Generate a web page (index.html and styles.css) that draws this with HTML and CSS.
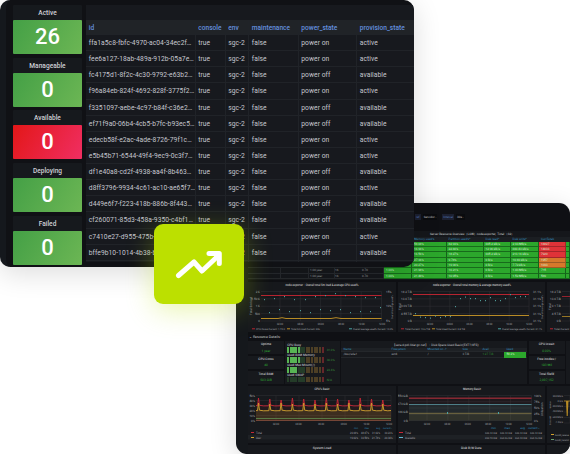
FILE: index.html
```html
<!DOCTYPE html>
<html lang="en">
<head>
<meta charset="utf-8">
<title>Monitoring</title>
<link rel="stylesheet" href="styles.css">
</head>
<body>
<main class="stage">
  <section class="back">
    <div class="filters"><b>ref</b><span>Servidor -</span><b class="gap">Interval</b><span>30s -</span></div>
    <div class="overview">
      <div class="ov-title">Server Resource Overview（LOW）node-exporter,&nbsp; Total:（32）</div>
      <div class="ov-grid" id="overview"></div>
    </div>
    <div class="charts charts-a">
      <div class="panel"><svg id="cpuTotal" viewBox="0 0 148 50"></svg></div>
      <div class="panel"><svg id="memTotal" viewBox="0 0 148 50"></svg></div>
      <div class="panel"><svg id="diskTotal" viewBox="0 0 23 50"></svg></div>
    </div>
    <div class="section-name">⌄ Resource Details:</div>
    <div class="details">
      <div class="stats">
        <div><b>Uptime</b><i>1 year</i></div>
        <div><b>CPU Cores</b><i>40</i></div>
        <div><b>Total RAM</b><i>503 GiB</i></div>
      </div>
      <div class="gauges" id="gauges"></div>
      <div class="disk">
        <div class="disk-title">【sera-d-pdl-lldar.gc.net】：Disk Space Used Basic(EXT?/XFS)</div>
        <div class="disk-row disk-head"><span>Name</span><span>Filesystem</span><span>Mounted on -?</span><span>Size</span><span>Avail</span><span>Used</span></div>
        <div class="disk-row"><span>/dev/sda1</span><span>ext4</span><span>/</span><span>3 TiB</span><span class="ok">1.27 TiB</span><span class="used">58.2%</span></div>
      </div>
      <div class="stats">
        <div><b>CPU iowait</b><i>0.00%</i></div>
        <div><b>Free inodes:/</b><i>183 Mil</i></div>
        <div><b>Total filefd</b><i>2,097,152</i></div>
      </div>
      <div class="panel"></div>
    </div>
    <div class="charts charts-b">
      <div class="panel"><svg id="cpuBasic" viewBox="0 0 148 57"></svg></div>
      <div class="panel"><svg id="memBasic" viewBox="0 0 148 57"></svg></div>
      <div class="panel"><svg id="netBasic" viewBox="0 0 23 57"></svg></div>
    </div>
    <div class="charts charts-c">
      <div class="panel">System Load</div><div class="panel">Disk R/W Data</div><div class="panel"></div>
    </div>
  </section>

  <section class="front">
    <div class="tiles">
      <div class="tile"><h3>Active</h3><p>26</p></div>
      <div class="tile"><h3>Manageable</h3><p>0</p></div>
      <div class="tile"><h3>Available</h3><p class="red">0</p></div>
      <div class="tile"><h3>Deploying</h3><p>0</p></div>
      <div class="tile"><h3>Failed</h3><p>0</p></div>
    </div>
    <div class="nodes" id="nodes">
      <div class="row head"><span>id</span><span>console</span><span>env</span><span>maintenance</span><span>power_state</span><span>provision_state</span></div>
    </div>
  </section>

  <div class="badge">
    <svg viewBox="0 0 90 80"><path d="M24.500 41 V41" stroke="none"/><path d="M24.500 51.500 L40 38 L48 47 L64 32" fill="none" stroke="#fff" stroke-width="5" stroke-linecap="round" stroke-linejoin="round"/><path d="M55 29.500 H65.300 V39.500" fill="none" stroke="#fff" stroke-width="5" stroke-linecap="round" stroke-linejoin="round"/><path d="M58 30 H65 V37 Z" fill="#fff"/></svg>
  </div>
</main>
<script src="script.js"></script>
</body>
</html>
```
FILE: styles.css
```css
* { box-sizing: border-box; }
body { margin: 0; background: #fff; font-family: Roboto, "Liberation Sans", sans-serif; }
.stage { position: relative; width: 570px; height: 454px; overflow: hidden; }

/* front card */
.front {
  position: absolute; left: 0; top: 0; width: 414px; height: 267px;
  display: flex; gap: 4px; padding: 5px 0 0 7px;
  border-left: 6px solid #15181d; background: #101115;
  border-radius: 10px; overflow: hidden;
}
.front, .back { box-shadow: 0 6px 28px rgba(0, 0, 0, .14); }
.tiles { width: 69px; display: flex; flex-direction: column; gap: 3.670px; flex: none; }
.tile { height: 49px; flex: none; background: #16191d; border-radius: 1px; }
.tile h3 { margin: 0; height: 15px; line-height: 16px; text-align: center; font-size: 6.600px; font-weight: 500; color: #cfd0d6; }
.tile p {
  margin: 0; height: 34px; line-height: 33px; text-align: center;
  font-size: 22px; font-weight: 500; color: #fff; border-radius: 1px;
  background: linear-gradient(120deg, #44a046, #6cb654);
}
.tile .red { background: linear-gradient(120deg, #e31718, #f02e62); }
.nodes { flex: 1; height: 257px; padding-top: 15px; background: #17191e; overflow: hidden; }
.row { display: grid; grid-template-columns: 109.500px 30px 23.500px 49.500px 58.500px 1fr; height: 16.140px; border-bottom: 1px solid #202328; }
.row span {
  padding-left: 2.800px; line-height: 17px; font-size: 6.700px; letter-spacing: .06px; color: #c6c7cf;
  border-right: 1px solid #202328; white-space: nowrap; overflow: hidden;
}
.row span:last-child { border-right: 0; }
.head { height: 15px; background: #202327; }
.head span { color: #6490df; font-weight: 500; font-size: 6.600px; line-height: 16px; letter-spacing: 0; }

/* badge */
.badge { position: absolute; left: 154px; top: 224px; width: 90px; height: 80px; border-radius: 9px; background: #bce000; box-shadow: 0 6px 28px rgba(188, 224, 0, .32); }
.badge svg { display: block; width: 90px; height: 80px; }

/* back card */
.back {
  position: absolute; left: 236px; top: 203px; width: 334px; height: 251px;
  border-left: 12px solid #15181c; border-radius: 11px; background: #0f1014; overflow: hidden;
  font-size: 3.400px; line-height: 4px; color: #a4a6ab; white-space: nowrap; text-rendering: geometricPrecision;
}
.filters { height: 28px; padding: 11px 0 0 167px; display: flex; align-items: flex-start; gap: 2px; font-size: 3px; }
.filters b { color: #5578be; font-weight: 400; background: #1c2030; padding: 1px; }
.filters span { background: #0a0b0e; padding: 1px; color: #c6c7ca; }
.filters .gap { margin-left: 3px; }
.overview { height: 49px; background: #15171b; }
.ov-title { height: 6px; padding: 1px 0 0 182px; color: #d6d7da; font-size: 3px; }
.ov-grid { display: grid; grid-template-columns: 33px 28px 26px 49px 28px 34.500px 37px 27px 28.500px 26.500px 1fr; grid-template-rows: 4.500px repeat(7, 5.400px); font-size: 3px; line-height: 4.600px; }
.ov-grid span { padding-left: 2px; border-right: .7px solid #14621a; border-bottom: 1px solid #176b1b; background: #2ca72c; color: #d4efd4; overflow: hidden; }
.ov-grid .h { background: #1b1e22; color: #328bbc; border-color: #1b1e22; line-height: 4px; }
.ov-grid .d { background: #15171b; color: #a0a2a6; border-color: #26292d; }
.ov-grid .d2 { padding-left: 1px; }
.ov-grid .pair { padding-left: 0; display: grid; grid-template-columns: 27px 1fr; }
.ov-grid .pair i { font-style: normal; }
.ov-grid .r { background: #df3338; border-color: #a3262a; }
.ov-grid .o { background: #d6782b; border-color: #9d5a24; }
.charts { display: grid; grid-template-columns: 148px 147.500px 1fr; gap: 1.500px; }
.panel { background: #17191d; overflow: hidden; }
.panel svg { display: block; height: 100%; }
.charts svg { width: 148px; }
.charts .panel:last-child svg { width: 23px; }
.charts-a { height: 50px; margin-top: 2px; }
.section-name { height: 9px; padding: 3px 0 0 1px; color: #c6c7ca; font-size: 3.600px; line-height: 4px; }
.details { display: grid; grid-template-columns: 36px 55px 186px 36px 1fr; gap: 1.200px; height: 43px; }
.stats { display: grid; grid-template-rows: repeat(3, 1fr); gap: 1.500px; text-align: center; }
.stats div { background: #17191d; padding-top: 1px; display: flex; flex-direction: column; gap: 2.500px; }
.stats b { color: #c3c4c9; font-size: 3.200px; font-weight: 500; }
.stats i { color: #2fae34; font-style: normal; font-size: 3.300px; }
.gauges { background: #17191d; padding: 2px 2px 0; }
.gauge b { display: block; font-size: 3.200px; line-height: 4.200px; font-weight: 500; color: #b6b8bd; }
.bar { display: flex; gap: .5px; align-items: center; height: 5.700px; }
.bar i { width: 2.150px; height: 5.400px; }
.bar em { margin-left: 2.500px; color: #37943a; font-style: normal; font-size: 3px; }
.disk { background: #17191d; }
.disk-title { height: 7px; padding: 1.500px 0 0 51px; color: #c4c5ca; font-size: 3.100px; }
.disk-row { display: grid; grid-template-columns: 48px 36px 35px 20px 24px 22px; height: 6px; line-height: 5.500px; font-size: 3px; border-bottom: .5px solid #24272b; }
.disk-row span { padding-left: 2px; }
.disk-head { height: 4px; line-height: 3.500px; color: #328bbc; background: #1e2125; }
.disk-row .ok { color: #2e8c32; }
.disk-row .used { background: #2ca72c; color: #d4efd4; }
.charts-b { height: 57px; margin-top: 2px; }
.charts-c { height: 14px; margin-top: 1.500px; text-align: center; color: #c4c5ca; font-weight: 500; font-size: 3.200px; line-height: 7px; }
svg text { font-family: Roboto, sans-serif; font-size: 3px; fill: #a6a8ad; text-rendering: geometricPrecision; }
svg .t { font-size: 3.200px; font-weight: 500; fill: #ccc; }
svg .b { fill: #328bbc; }
svg .l { font-size: 2.400px; }
```
FILE: script.js
```js
// Node inventory
const ids = ['ffa1a5c8-fbfc-4970-ac04-34ec2f…', 'fee6a127-18ab-489a-912b-05a7e…', 'fc4175d1-8f2c-4c30-9792-e63b2…', 'f96a84eb-824f-4692-828f-3775f2…', 'f3351097-aebe-4c97-b84f-c36e2…', 'ef71f9a0-06b4-4cb5-b7fc-b93ec5…', 'edecb58f-e2ac-4ade-8726-79f1c…', 'e5b45b71-6544-49f4-9ec9-0c3f7…', 'df1e40a8-cd2f-4938-aa4f-8b463…', 'd8ff3796-9934-4c61-ac10-ae65f7…', 'd449e6f7-f223-418b-886b-8f443…', 'cf260071-85d3-458a-9350-c4bf1…', 'c7410e27-d955-475b-a1c0-52d0e…', 'bffe9b10-1014-4b38-b2f7-1c09d…'];
const on = '11010011010010';
document.getElementById('nodes').innerHTML += ids.map((id, i) => {
  const a = on[i] === '1';
  return '<div class="row">' + [id, 'true', 'sgc-2', 'false', a ? 'power on' : 'power off', a ? 'active' : 'available'].map(v => `<span>${v}</span>`).join('') + '</div>';
}).join('') + '<div class="row">' + '<span></span>'.repeat(6) + '</div>';

// Overview table
let cells = ['', '', '', '', '', 'Memory used%', 'Partition used%*', 'Disk read*', 'Disk write*', 'CurrEstab', ''].map(v => `<span class="h">${v}</span>`).join('');
const rows = [['58.08%', '82.93%', '665.2 kB/s', '2.93 MB/s', '16827'], ['16.96%', '22.66%', '12.96 kB/s', '660.43 kB/s', '14033'], ['16.56%', '18.27%', '665.2 kB/s', '213.16 kB/s', '7929'], ['27.36%', '9.78%', '0 B/s', '10.69 kB/s', '1957'], ['20.27%', '19.96%', '0 B/s', '7.72 kB/s', '1093'], ['21.98%', '16.21%', '0 B/s', '1.43 MB/s', '715'], ['21.48%', '10.95%', '0 B/s', '1.52 MB/s', '589']];
rows.forEach((r, i) => {
  cells += '<span class="d"></span><span class="d"></span><span class="d d2">1.00 year</span><span class="d pair"><i>16</i><i>0.70</i></span><span>1.00%</span>';
  r.forEach((v, j) => { cells += `<span class="${j === 4 && i < 5 ? (i < 3 ? 'r' : 'o') : ''}">${v}</span>`; });
  cells += '<span></span>';
});
document.getElementById('overview').innerHTML = cells;

// Segmented gauges
document.getElementById('gauges').innerHTML = [['CPU Busy', 5, '31.0%'], ['Used RAM Memory', 5, '30.0%'], ['Used Max Mount(/)', 4, '23.4%'], ['Used SWAP', 0, 'N/A']].map(([n, k, v]) => {
  let s = '';
  for (let i = 0; i < 14; i++) s += `<i style="background:${i < k ? '#58b554' : i < 7 ? '#243c28' : i < 13 ? '#4d3f25' : '#66262a'}"></i>`;
  return `<div class="gauge"><b>${n}</b><div class="bar">${s}<em>${v}</em></div></div>`;
}).join('');

// Charts
const put = (id, s) => { document.getElementById(id).innerHTML = s; };
const line = (x1, y1, x2, y2, c, w = .5) => `<path d="M${x1} ${y1}L${x2} ${y2}" stroke="${c}" stroke-width="${w}" fill="none"/>`;
const txt = (x, y, s, w, a = 'start', c = '') => `<text x="${x}" y="${y}" text-anchor="${a}" class="${c}" ${w ? `textLength="${w}" lengthAdjust="spacingAndGlyphs"` : ''}>${s}</text>`;
const box = (x, y, w, h, c) => `<rect x="${x}" y="${y}" width="${w}" height="${h}" fill="${c}"/>`;
function grid(x1, x2, y1, y2, nx, ny, first) {
  let s = '';
  for (let i = 0; i <= ny; i++) { const y = y1 + (y2 - y1) * i / ny; s += line(x1, y, x2, y, '#303337'); }
  for (let i = 0; i < nx; i++) { const x = first + (x2 - first) * i / (nx - 1); s += line(x, y1, x, y2, '#303337'); }
  return s;
}
const times = (first, last, n, y) => {
  let s = '';
  for (let i = 0; i < n; i++) s += txt(first + (last - first) * i / (n - 1), y, ['02:00', '04:00', '06:00', '08:00', '10:00', '12:00'][i], 6, 'middle');
  return s;
};
const labels = (x, y1, y2, vals, a) => vals.map((v, i) => txt(x, y1 + 1 + (y2 - y1) * i / (vals.length - 1), v, 0, a)).join('');
const dots = p => p.map(([x, y]) => box(x, y, 1, 1.200, '#4f9b98')).join('');

put('cpuTotal', txt(74, 4.200, 'node-exporter：Overall total 5m load & average CPU used%', 73, 'middle', 't')
  + grid(13, 133.500, 9.500, 39, 6, 4, 32) + labels(12, 9.500, 39, ['2 K', '1.50 K', '1 K', '500', '0'], 'end') + labels(138, 9.500, 39, ['15%', '10%', '5%'], 'start')
  + line(13, 13.500, 133.500, 13.500, '#b62430', 1)
  + '<path d="M13 36.500h17l4-.8 4 .8h45l5-.8 5 .8h40.500" stroke="#b88b25" stroke-width="1" fill="none"/>'
  + dots([[16, 17], [21, 30], [26, 16], [31, 27], [36, 14], [41, 29], [46, 17], [52, 28], [57, 17], [62, 30], [67, 14], [72, 27], [77, 13], [82, 28], [87, 11], [92, 27], [97, 13], [102, 30], [107, 14], [112, 29], [117, 15], [122, 29], [127, 15], [132, 25]])
  + times(32, 134, 6, 43)
  + '<text transform="translate(4 33) rotate(-90)">Total 5m load</text><text transform="translate(145 37) rotate(-90)" class="l">Overall average used%</text>'
  + box(4, 46.300, 3, 1, '#b62430') + txt(8, 48, 'CPU Cores Current: 1.72 K', 29, 'start', 'l') + box(39, 46.300, 3, 1, '#b88b25') + txt(43, 48, 'Total 5m load Current: 306', 29, 'start', 'l') + box(101, 46.300, 3, 1, '#4aa4a4') + txt(105, 48, 'Overall average used% Current: 10.0%', 40, 'start', 'l'));

put('memTotal', txt(74, 4.200, 'node-exporter：Overall total memory & average memory used%', 78, 'middle', 't')
  + grid(15, 131, 9.500, 39, 6, 4, 32) + labels(14, 9.500, 39, ['18.2 TiB', '13.6 TiB', '9.09 TiB', '4.55 TiB', '0 B'], 'end') + labels(135, 9.500, 39, ['31.1%', '31.1%', '31.1%', '31.1%', '31.1%'])
  + line(15, 12.500, 131, 12.500, '#b62430', 1) + line(15, 33.500, 131, 33.500, '#b88b25', 1)
  + dots([[17, 31], [22, 34.500], [27, 35], [32, 35.500], [37, 33.500], [42, 35], [47, 34], [52, 34], [57, 24], [62, 16], [67, 14.500], [72, 16], [77, 16], [82, 18], [87, 18], [92, 15], [97, 18], [102, 18], [107, 16], [112, 12], [117, 15], [122, 14], [127, 14]])
  + times(32, 131, 6, 43)
  + '<text transform="translate(3 28) rotate(-90)">Total</text><text transform="translate(145 37) rotate(-90)" class="l">Overall average used%</text>'
  + box(3, 46.300, 3, 1, '#b62430') + txt(7, 48, 'Total Current: 15.6 TiB', 25, 'start', 'l') + box(34, 46.300, 3, 1, '#b88b25') + txt(38, 48, 'Total Used Current: 3.8 TiB', 29, 'start', 'l') + box(100, 46.300, 3, 1, '#4aa4a4') + txt(104, 48, 'Overall average used% Current: 31.1%', 40, 'start', 'l'));

put('diskTotal', grid(15, 24, 9.500, 39, 2, 4, 23) + labels(14, 9.500, 39, ['18.2 TiB', '13.6 TiB', '9.1 TiB', '4.5 TiB', '0 B'], 'end') + line(15, 14.500, 24, 14.500, '#b62430', .8) + line(15, 34.500, 24, 34.500, '#b88b25', .8) + '<text transform="translate(4 28) rotate(-90)">Total</text>' + box(3, 46.300, 3, 1, '#b62430') + txt(7, 48, 'Total Current', 15, 'start', 'l'));

let top1 = 'M8 19.500', top2 = 'M8 24.500';
for (let i = 0; i < 12; i++) {
  const x = 10.500 + i * 11.300;
  top1 += `L${x - 1} 19.800L${x} ${12 + i % 3}L${x + 1} 19.300L${x + 5} 19.900`;
  top2 += `L${x - 1} 24.700L${x} ${17 + i % 2}L${x + 1} 24.200L${x + 5} 24.800`;
}
const stat = (y, vals, c = '') => [110, 121, 132, 144.500].map((x, i) => txt(x, y, vals[i], 8, 'end', c)).join('');
put('cpuBasic', txt(74, 4.200, 'CPU% Basic', 15, 'middle', 't') + grid(8, 143, 9.500, 34.500, 6, 5, 28)
  + labels(7, 9.500, 34.500, ['50%', '40%', '30%', '20%', '10%', '0%'], 'end')
  + `<path d="${top1}L143 19.500V34.500H8Z" fill="#b62430" opacity=".08"/><path d="${top2}L143 24.500V34.500H8Z" fill="#b88b25" opacity=".18"/>`
  + `<path d="${top1}L143 19.500" stroke="#c62635" stroke-width=".9" fill="none"/><path d="${top2}L143 24.500" stroke="#d3a12c" stroke-width=".9" fill="none"/>`
  + line(8, 32.500, 143, 32.500, '#5b8149', .9) + line(8, 34.500, 143, 34.500, '#a1573f', .6) + times(28, 141, 6, 38.500)
  + box(0, 49, 148, 4.500, '#1e2125') + ['min', 'max', 'avg', 'current⌄'].map((s, i) => txt([110, 121, 132, 144.500][i], 42.800, s, 0, 'end', 'b l')).join('')
  + box(3, 46, 3, 1, '#c62635') + txt(8, 47.500, 'Total', 6) + stat(47.500, ['29.68%', '48.87%', '31.62%', '30.23%']) + box(3, 51, 3, 1, '#d3a12c') + txt(8, 52.500, 'User', 5) + stat(52.500, ['19.62%', '33.54%', '21.78%', '20.34%']));

put('memBasic', txt(74, 4.200, 'Memory Basic', 18, 'middle', 't') + grid(11, 133.500, 9.500, 34.500, 6, 4, 29)
  + labels(10, 9.500, 34.500, ['559 GiB', '373 GiB', '186 GiB', '0 B'], 'end') + labels(136, 9.500, 34.500, ['100%', '75%', '50%', '25%', '0%'])
  + box(11, 11, 122.500, 23.500, '#b624300d') + box(11, 18.500, 122.500, 16, '#4aa4a41f') + box(11, 27.500, 122.500, 7, '#b88b2518')
  + line(11, 12.300, 133.500, 12.300, '#862832', 1.500) + line(11, 18.500, 133.500, 18.500, '#63a7b3', .7) + line(11, 27.300, 133.500, 27.300, '#9a8a4c', .7) + box(49, 26, 1, 2, '#4aa4a4') + box(100, 26, 1, 2, '#4aa4a4')
  + times(29, 131, 6, 38.500) + '<text transform="translate(145 30) rotate(-90)">Utilization</text>'
  + [['min', 98], ['max', 112], ['avg', 127], ['current⌄', 142]].map(p => txt(p[1], 42.800, p[0], 0, 'end', 'b')).join('')
  + box(0, 49, 148, 4.500, '#1e2125') + box(1, 46, 4, 1, '#c62635') + txt(7, 47.500, 'Total', 6) + box(1, 51, 4, 1, '#63b7d3') + txt(7, 52.500, 'Available', 10)
  + [[87, '503.42 GiB'], [102, '503.42 GiB'], [117, '503.42 GiB'], [132, '503.42 GiB']].map(p => txt(p[0], 47.500, p[1], 12, 'start', 'l')).join('')
  + [[87, '353.70 GiB'], [102, '365.96 GiB'], [117, '362.40 GiB'], [132, '362.46 GiB']].map(p => txt(p[0], 52.500, p[1], 12, 'start', 'l')).join(''));

put('netBasic', grid(17, 24, 9.500, 37, 2, 5, 23) + ['200 Mb/s', '0 b/s', '-200 Mb/s', '-400 Mb/s', '-600 Mb/s', '-1 Gb/s'].map((v, i) => txt(16, 10.500 + i * 5.300, v, 0, 'end', 'l')).join('')
  + line(17, 15, 24, 15, '#b88b25', .8) + '<path d="M19 15h2.500l-.8 15h-1z" fill="#b88b25"/>'
  + '<text transform="translate(4 23) rotate(-90)" class="l">receive</text><text transform="translate(4 39) rotate(-90)" class="l">transmit</text>'
  + box(4, 48, 3, 1, '#d3a12c') + txt(8, 49.500, 'bond0_receive', 14, 'start', 'l') + box(4, 53, 3, 1, '#6ba06d') + txt(8, 54.500, 'bond0_transmit', 14, 'start', 'l'));
```
